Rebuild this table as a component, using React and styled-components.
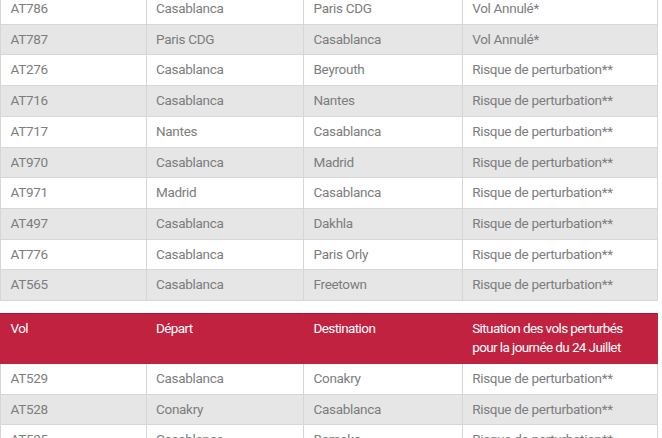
import React from "react";
import styled, { createGlobalStyle } from "styled-components";

const Global = createGlobalStyle`
  html, body { margin: 0; padding: 0; background: #fff; }
  body { font-family: Roboto, "Liberation Sans", Arial, sans-serif; overflow: hidden; }
`;

const Page = styled.div`
  margin-top: -7px;
  width: 657px;
  display: flex;
  flex-direction: column;
  gap: 11.5px;
`;

const Table = styled.table`
  width: 657px;
  border-collapse: collapse;
  table-layout: fixed;
  font-size: 13.5px;
  letter-spacing: -0.3px;
  color: #7d7d7d;
`;

const Col = styled.col`
  width: ${(p) => p.$w}px;
`;

const Row = styled.tr`
  background: ${(p) => (p.$alt ? "#e6e6e6" : "#ffffff")};
`;

const Cell = styled.td`
  border: 1px solid #d6d6d6;
  padding: 5px 9.5px;
  line-height: 19.7px;
  height: 19.7px;
  white-space: nowrap;
  vertical-align: top;
`;

const Head = styled.th`
  background: #c1223f;
  color: #fff;
  font-weight: 400;
  letter-spacing: -0.6px;
  text-align: left;
  vertical-align: top;
  padding: 5px 9.5px;
  line-height: 19.7px;
  height: 39.5px;
  white-space: nowrap;
  border: 1px solid #c1223f;
  border-left: 1px solid rgba(255, 255, 255, 0.55);
  border-top: 1px solid #a51a33;
  &:first-child { border-left: 1px solid #c1223f; }
`;

const widths = [145.5, 157.5, 158.7, 195];

const first = [
  ["AT786", "Casablanca", "Paris CDG", "Vol Annulé*"],
  ["AT787", "Paris CDG", "Casablanca", "Vol Annulé*"],
  ["AT276", "Casablanca", "Beyrouth", "Risque de perturbation**"],
  ["AT716", "Casablanca", "Nantes", "Risque de perturbation**"],
  ["AT717", "Nantes", "Casablanca", "Risque de perturbation**"],
  ["AT970", "Casablanca", "Madrid", "Risque de perturbation**"],
  ["AT971", "Madrid", "Casablanca", "Risque de perturbation**"],
  ["AT497", "Casablanca", "Dakhla", "Risque de perturbation**"],
  ["AT776", "Casablanca", "Paris Orly", "Risque de perturbation**"],
  ["AT565", "Casablanca", "Freetown", "Risque de perturbation**"],
];

const second = [
  ["AT529", "Casablanca", "Conakry", "Risque de perturbation**"],
  ["AT528", "Conakry", "Casablanca", "Risque de perturbation**"],
  ["AT525", "Casablanca", "Bamako", "Risque de perturbation**"],
];

const Cols = () => (
  <colgroup>
    {widths.map((w, i) => (
      <Col key={i} $w={w} />
    ))}
  </colgroup>
);

const Body = ({ rows }) => (
  <tbody>
    {rows.map((r, i) => (
      <Row key={r[0]} $alt={i % 2 === 1}>
        {r.map((c, j) => (
          <Cell key={j}>{c}</Cell>
        ))}
      </Row>
    ))}
  </tbody>
);

export default function App() {
  return (
    <>
      <Global />
      <Page>
        <Table>
          <Cols />
          <Body rows={first} />
        </Table>
        <Table>
          <Cols />
          <thead>
            <tr>
              <Head>Vol</Head>
              <Head>Départ</Head>
              <Head>Destination</Head>
              <Head>
                Situation des vols perturbés
                <br />
                pour la journée du 24 Juillet
              </Head>
            </tr>
          </thead>
          <Body rows={second} />
        </Table>
      </Page>
    </>
  );
}
